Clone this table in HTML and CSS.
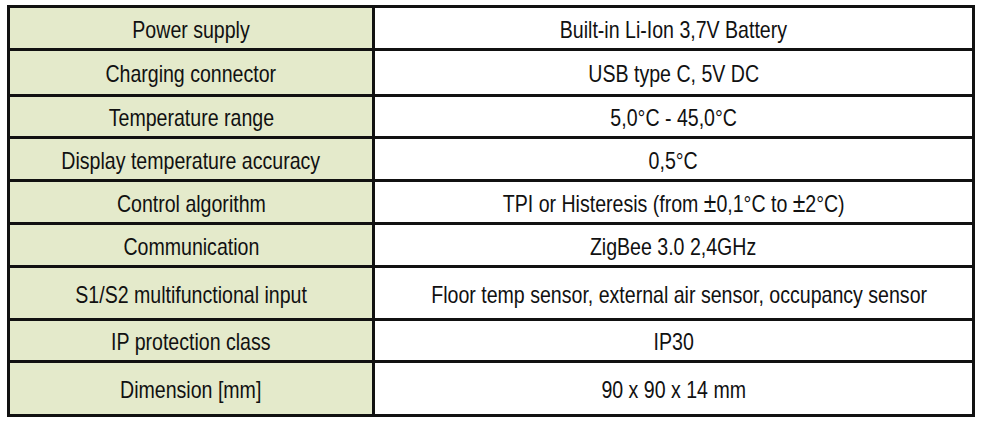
FILE: index.html
```html
<!DOCTYPE html>
<html>
<head>
<meta charset="utf-8">
<link rel="stylesheet" href="styles.css">
</head>
<body>
<table class="spec">
  <tr class="r43"><td class="k"><span class="t">Power supply</span></td><td class="v"><span class="t">Built-in Li-Ion 3,7V Battery</span></td></tr>
  <tr class="r46"><td class="k"><span class="t">Charging connector</span></td><td class="v"><span class="t">USB type C, 5V DC</span></td></tr>
  <tr class="r42"><td class="k"><span class="t">Temperature range</span></td><td class="v"><span class="t">5,0°C - 45,0°C</span></td></tr>
  <tr class="r43"><td class="k"><span class="t">Display temperature accuracy</span></td><td class="v"><span class="t">0,5°C</span></td></tr>
  <tr class="r43"><td class="k"><span class="t">Control algorithm</span></td><td class="v"><span class="t">TPI or Histeresis (from <span class="pm">±</span>0,1°C to <span class="pm">±</span>2°C)</span></td></tr>
  <tr class="r43"><td class="k"><span class="t">Communication</span></td><td class="v"><span class="t">ZigBee 3.0 2,4GHz</span></td></tr>
  <tr class="r53"><td class="k"><span class="t">S1/S2 multifunctional input</span></td><td class="v"><span class="t">Floor temp sensor, external air sensor, occupancy sensor</span></td></tr>
  <tr class="r42"><td class="k"><span class="t">IP protection class</span></td><td class="v"><span class="t">IP30</span></td></tr>
  <tr class="r54"><td class="k"><span class="t">Dimension [mm]</span></td><td class="v"><span class="t">90 x 90 x 14 mm</span></td></tr>
</table>
</body>
</html>
```
FILE: styles.css
```css
html, body {
  margin: 0;
  padding: 0;
  background: #ffffff;
}
.spec {
  margin: 5px 0 0 7px;
  width: 968px;
  border-collapse: collapse;
  font-family: "Liberation Sans", Arial, sans-serif;
  font-size: 24px;
  color: #111111;
  table-layout: fixed;
}
.spec td {
  border: 3px solid #111111;
  text-align: center;
  vertical-align: middle;
  padding: 3px 0 0 0;
  white-space: nowrap;
}
.spec .k {
  width: 362px;
  background: #e4eacb;
}
.spec .v {
  background: #ffffff;
}
.t {
  display: inline-block;
  transform: scaleX(0.815);
  transform-origin: center;
  line-height: 28px;
}
.pm {
  font-size: 28px;
  line-height: 20px;
}
.r42 { height: 42px; }
.r43 { height: 43px; }
.r46 { height: 46px; }
.r53 { height: 53px; }
.r54 { height: 54px; }
```
